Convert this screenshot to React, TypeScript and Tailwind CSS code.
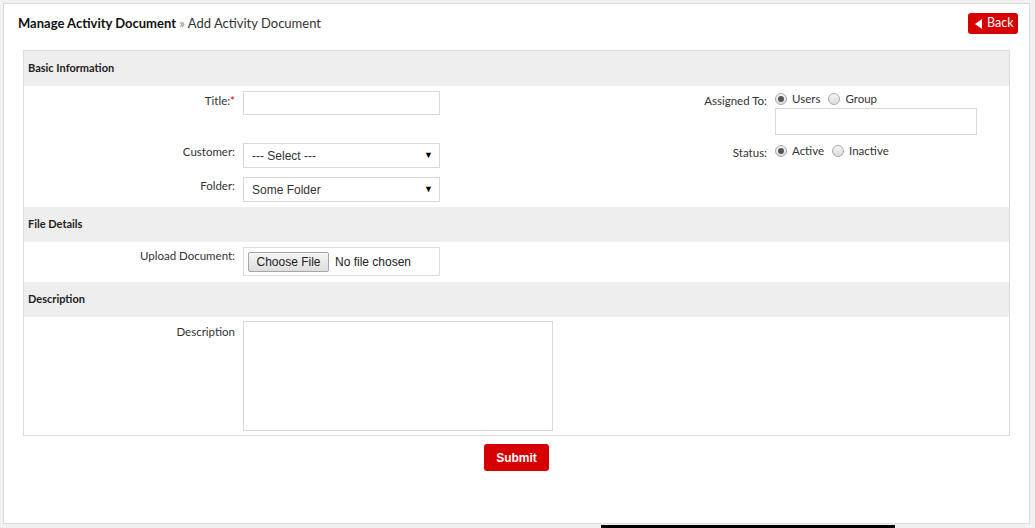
import React from "react";

const LATO = "font-['Lato','Open_Sans','Liberation_Sans',sans-serif]";
const ARIAL = "font-['Liberation_Sans','Arial',sans-serif]";

function Radio({ checked }: { checked?: boolean }) {
  return (
    <span className="inline-flex h-[12px] w-[12px] items-center justify-center rounded-full border border-[#a9a9a9] bg-gradient-to-b from-[#f4f4f4] to-[#dcdcdc]">
      {checked && <span className="h-[6px] w-[6px] rounded-full bg-[#555]" />}
    </span>
  );
}

function SectionHeader({ title }: { title: string }) {
  return (
    <div className="flex h-[35px] items-center bg-[#eeeeee] pl-[4px] text-[11px] font-bold text-[#222]">
      {title}
    </div>
  );
}

function Label({ children, className = "" }: { children: React.ReactNode; className?: string }) {
  return (
    <div className={`shrink-0 pr-[8px] text-right text-[11.5px] text-[#333] ${className}`}>
      {children}
    </div>
  );
}

function FakeSelect({ value }: { value: string }) {
  return (
    <div className={`flex h-[25px] w-[197px] items-center justify-between border border-[#d8d8d8] bg-white pl-[8px] pr-[6px] text-[12px] text-[#333] ${ARIAL}`}>
      <span>{value}</span>
      <span className="text-[9px] text-black">▼</span>
    </div>
  );
}

export default function App() {
  return (
    <div className={`h-[528px] w-[1035px] overflow-hidden bg-[#f1f1f1] pl-[3px] pr-[5px] pt-[3px] ${LATO}`}>
      <div className="h-[521px] border border-[#dcdcdc] bg-white">
        {/* heading */}
        <div className="flex items-start justify-between pl-[14px] pr-[11px] pt-[9px]">
          <div className="text-[13px] leading-[20px] text-[#333]">
            <span className="font-bold text-[#111]">Manage Activity Document</span>
            <span className="text-[#888]"> » </span>
            <span>Add Activity Document</span>
          </div>
          <button className="flex h-[21px] w-[50px] items-center gap-[5px] rounded-[3px] bg-[#d60000] pl-[7px] text-[12.5px] text-white">
            <svg width="7" height="10" viewBox="0 0 7 10">
              <path d="M7 0 L0 5 L7 10 Z" fill="white" />
            </svg>
            Back
          </button>
        </div>

        {/* form box */}
        <div className="ml-[19px] mr-[19px] mt-[16px] border border-[#dcdcdc]">
          <SectionHeader title="Basic Information" />

          <div className="flex">
            {/* left column */}
            <div className="w-[493px]">
              <div className="flex h-[52px] pt-[5px]">
                <Label className="w-[219px] pt-[1px]">
                  Title:<span className="text-[#d60000]">*</span>
                </Label>
                <input className="h-[24px] w-[197px] border border-[#d8d8d8] bg-white outline-none" />
              </div>
              <div className="flex h-[34px] pt-[5px]">
                <Label className="w-[219px]">Customer:</Label>
                <FakeSelect value="--- Select ---" />
              </div>
              <div className="flex h-[35px] pt-[5px]">
                <Label className="w-[219px]">Folder:</Label>
                <FakeSelect value="Some Folder" />
              </div>
            </div>

            {/* right column */}
            <div className="flex-1">
              <div className="flex h-[52px] pt-[5px]">
                <Label className="w-[258px] pt-[1px]">Assigned To:</Label>
                <div>
                  <div className="flex h-[16px] items-center gap-[5px] text-[11.5px] text-[#333]">
                    <Radio checked />
                    <span className="mr-[3px]">Users</span>
                    <Radio />
                    <span>Group</span>
                  </div>
                  <div className="mt-[1px] h-[27px] w-[202px] border border-[#d8d8d8] bg-white" />
                </div>
              </div>
              <div className="flex h-[34px] pt-[5px]">
                <Label className="w-[258px] pt-[1px]">Status:</Label>
                <div className="flex h-[16px] items-center gap-[5px] text-[11.5px] text-[#333]">
                  <Radio checked />
                  <span className="mr-[3px]">Active</span>
                  <Radio />
                  <span>Inactive</span>
                </div>
              </div>
            </div>
          </div>

          <SectionHeader title="File Details" />
          <div className="flex h-[40px] pt-[5px]">
            <Label className="w-[219px]">Upload Document:</Label>
            <div className={`flex h-[29px] w-[197px] items-center gap-[6px] border border-[#dcdcdc] bg-white pl-[4px] text-[12px] text-[#222] ${ARIAL}`}>
              <span className="flex h-[20px] w-[81px] items-center justify-center rounded-[2px] border border-[#a6a6a6] bg-gradient-to-b from-[#f6f6f6] to-[#dedede]">
                Choose File
              </span>
              <span>No file chosen</span>
            </div>
          </div>

          <SectionHeader title="Description" />
          <div className="flex h-[118px] pt-[4px]">
            <Label className="w-[219px] pt-[2px]">Description</Label>
            <textarea className="h-[110px] w-[310px] resize-none border border-[#d8d8d8] bg-white outline-none" />
          </div>
        </div>

        <div className="mt-[8px] flex justify-center">
          <button className={`h-[27px] w-[65px] rounded-[3px] bg-[#d60000] text-[12px] font-bold text-white ${ARIAL}`}>
            Submit
          </button>
        </div>
      </div>
      <div className="ml-[598px] mt-[1px] h-[3px] w-[294px] bg-black" />
    </div>
  );
}
